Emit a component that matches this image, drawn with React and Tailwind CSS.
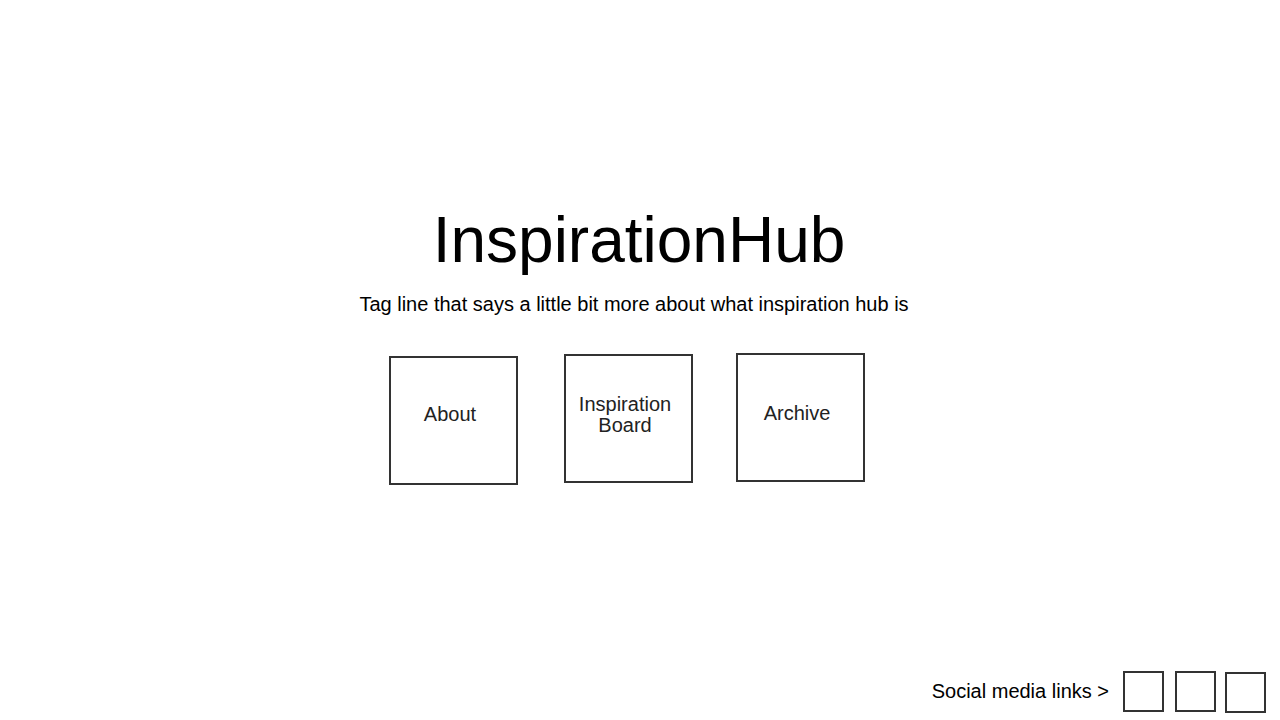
export default function App() {
  return (
    <div className="flex h-screen flex-col bg-white text-black" style={{ fontFamily: '"Liberation Sans", Arial, sans-serif' }}>
      <main className="flex flex-1 flex-col items-center pt-[204px]">
        <h1 className="pr-[2px] text-[64px] leading-[72px] font-normal">InspirationHub</h1>
        <p className="mt-[16px] pr-[12px] text-[20px] leading-[24px]">Tag line that says a little bit more about what inspiration hub is</p>
        <nav className="mt-[37px] flex items-start pr-[24px]">
          <a className="ml-[-3px] mt-[3px] flex h-[129px] w-[129px] items-center justify-center border-2 border-[#333] pr-[6px] pb-[12px] text-[20px] leading-[21px] text-[#222]">About</a>
          <a className="ml-[46px] mt-[1px] flex h-[129px] w-[129px] items-center justify-center border-2 border-[#333] pr-[6px] pb-[8px] text-center text-[20px] leading-[21px] text-[#222]">Inspiration<br />Board</a>
          <a className="ml-[43px] flex h-[129px] w-[129px] items-center justify-center border-2 border-[#333] pr-[6px] pb-[8px] text-[20px] leading-[21px] text-[#222]">Archive</a>
        </nav>
      </main>
      <footer className="flex items-center justify-end pr-[14px] pb-[7px]">
        <span className="mr-[14px] mb-[2px] text-[20px] leading-[24px]">Social media links &gt;</span>
        <div className="h-[41px] w-[41px] border-2 border-[#333]" />
        <div className="ml-[11px] h-[41px] w-[41px] border-2 border-[#333]" />
        <div className="ml-[9px] mt-[2px] h-[41px] w-[41px] border-2 border-[#333]" />
      </footer>
    </div>
  );
}
